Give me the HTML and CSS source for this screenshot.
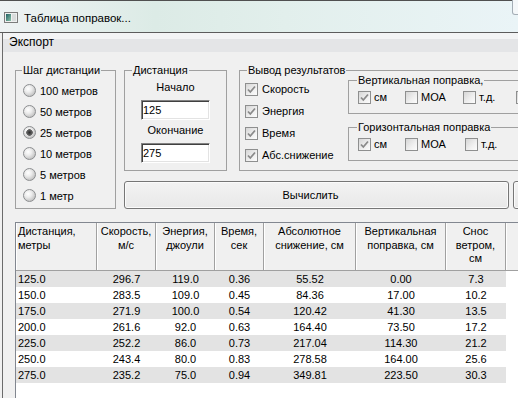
FILE: index.html
```html
<!DOCTYPE html>
<html lang="ru">
<head>
  <meta charset="UTF-8" />
  <title>Таблица поправок...</title>
  <link rel="stylesheet" href="styles.css">
</head>
<body>
  <div class="titlebar">
    <svg class="app-icon" width="14" height="11" viewBox="0 0 14 11">
      <defs>
        <linearGradient id="ico" x1="0" y1="0" x2="1" y2="1">
          <stop offset="0" stop-color="#1f5f63" />
          <stop offset="1" stop-color="#8cc3a8" />
        </linearGradient>
      </defs>
      <rect x="0.5" y="0.5" width="13" height="10" fill="#eef0f0" stroke="#7c7c7c" />
      <rect x="2" y="2" width="5" height="7" fill="url(#ico)" />
      <rect x="8" y="2" width="4" height="7" fill="#d9dcdc" />
    </svg>
    <span class="title">Таблица поправок...</span>
    <span class="win-btn"></span>
  </div>

  <div class="frame">
    <div class="window">
      <div class="menubar"><span>Экспорт</span></div>

      <div class="client">
        <div class="top">
          <fieldset class="group step">
            <legend>Шаг дистанции</legend>
            <div class="radios">
              <label class="radio"><span class="dot"></span>100 метров</label>
              <label class="radio"><span class="dot"></span>50 метров</label>
              <label class="radio"><span class="dot on"></span>25 метров</label>
              <label class="radio"><span class="dot"></span>10 метров</label>
              <label class="radio"><span class="dot"></span>5 метров</label>
              <label class="radio"><span class="dot"></span>1 метр</label>
            </div>
          </fieldset>

          <div class="right">
            <div class="params">
              <fieldset class="group dist">
                <legend>Дистанция</legend>
                <div class="caption">Начало</div>
                <input class="field" type="text" value="125">
                <div class="caption">Окончание</div>
                <input class="field" type="text" value="275">
              </fieldset>

              <fieldset class="group output">
                <legend>Вывод результатов</legend>
                <div class="output-body">
                  <div class="checks">
                    <label class="check"><span class="box on"><svg width="11" height="11" viewBox="0 0 11 11"><path d="M2 5.5 L4.3 8 L9 2.5" /></svg></span>Скорость</label>
                    <label class="check"><span class="box on"><svg width="11" height="11" viewBox="0 0 11 11"><path d="M2 5.5 L4.3 8 L9 2.5" /></svg></span>Энергия</label>
                    <label class="check"><span class="box on"><svg width="11" height="11" viewBox="0 0 11 11"><path d="M2 5.5 L4.3 8 L9 2.5" /></svg></span>Время</label>
                    <label class="check"><span class="box on"><svg width="11" height="11" viewBox="0 0 11 11"><path d="M2 5.5 L4.3 8 L9 2.5" /></svg></span>Абс.снижение</label>
                  </div>

                  <div class="subgroups">
                    <fieldset class="group sub">
                      <legend>Вертикальная поправка,</legend>
                      <div class="units">
                        <label class="check u1"><span class="box on"><svg width="11" height="11" viewBox="0 0 11 11"><path d="M2 5.5 L4.3 8 L9 2.5" /></svg></span>см</label>
                        <label class="check u2"><span class="box"></span>МОА</label>
                        <label class="check u3"><span class="box"></span>т.д.</label>
                        <label class="check"><span class="box"></span></label>
                      </div>
                    </fieldset>
                    <fieldset class="group sub">
                      <legend>Горизонтальная поправка</legend>
                      <div class="units">
                        <label class="check u1"><span class="box on"><svg width="11" height="11" viewBox="0 0 11 11"><path d="M2 5.5 L4.3 8 L9 2.5" /></svg></span>см</label>
                        <label class="check u2 wide"><span class="box"></span>МОА</label>
                        <label class="check u3"><span class="box"></span>т.д.</label>
                      </div>
                    </fieldset>
                  </div>
                </div>
              </fieldset>
            </div>

            <div class="actions">
              <button class="btn calc">Вычислить</button>
              <button class="btn more"></button>
            </div>
          </div>
        </div>

        <div class="grid">
          <table>
            <thead>
              <tr>
                <th class="c1 left">Дистанция,<br>метры</th>
                <th class="c2">Скорость,<br>м/с</th>
                <th class="c3">Энергия,<br>джоули</th>
                <th class="c4">Время,<br>сек</th>
                <th class="c5">Абсолютное<br>снижение, см</th>
                <th class="c6">Вертикальная<br>поправка, см</th>
                <th class="c7">Снос<br>ветром,<br>см</th>
                <th class="filler"></th>
              </tr>
            </thead>
            <tbody>
              <tr><td class="left">125.0</td><td>296.7</td><td>119.0</td><td>0.36</td><td>55.52</td><td>0.00</td><td>7.3</td><td class="filler"></td></tr>
              <tr><td class="left">150.0</td><td>283.5</td><td>109.0</td><td>0.45</td><td>84.36</td><td>17.00</td><td>10.2</td><td class="filler"></td></tr>
              <tr><td class="left">175.0</td><td>271.9</td><td>100.0</td><td>0.54</td><td>120.42</td><td>41.30</td><td>13.5</td><td class="filler"></td></tr>
              <tr><td class="left">200.0</td><td>261.6</td><td>92.0</td><td>0.63</td><td>164.40</td><td>73.50</td><td>17.2</td><td class="filler"></td></tr>
              <tr><td class="left">225.0</td><td>252.2</td><td>86.0</td><td>0.73</td><td>217.04</td><td>114.30</td><td>21.2</td><td class="filler"></td></tr>
              <tr><td class="left">250.0</td><td>243.4</td><td>80.0</td><td>0.83</td><td>278.58</td><td>164.00</td><td>25.6</td><td class="filler"></td></tr>
              <tr><td class="left">275.0</td><td>235.2</td><td>75.0</td><td>0.94</td><td>349.81</td><td>223.50</td><td>30.3</td><td class="filler"></td></tr>
            </tbody>
          </table>
        </div>
      </div>
    </div>
  </div>
</body>
</html>
```

FILE: styles.css
```css
* {
  box-sizing: border-box;
}

body {
  margin: 0;
  width: 518px;
  height: 398px;
  overflow: hidden;
  background-color: #f0f0f0;
  font-family: "Liberation Sans", Arial, sans-serif;
  font-size: 11px;
  color: #000;
}

/* Заголовок окна */
.titlebar {
  display: flex;
  align-items: center;
  height: 33px;
  padding-left: 4px;
  border-top: 1px solid #505050;
  border-bottom: 1px solid #5c5c5c;
  background: linear-gradient(90deg, #eef2f3 0%, #dcebe6 30%, #e2efec 55%, #eaf4f7 100%);
}

.app-icon {
  flex: none;
  margin-top: 1px;
}

.title {
  margin-left: 6px;
  margin-top: 3px;
  font-size: 11.5px;
}

.win-btn {
  align-self: flex-start;
  flex: none;
  width: 12px;
  height: 15px;
  margin-left: auto;
  margin-right: -6px;
  margin-top: -1px;
  border: 1px solid #a4adb5;
  border-top: none;
  border-radius: 0 0 0 3px;
  background: #f4f7f9;
}

.frame {
  padding-left: 2px;
}

.window {
  height: 365px;
  border-left: 1px solid #6b6b6b;
}

.menubar {
  height: 19px;
  padding-left: 6px;
  line-height: 19px;
  font-size: 12px;
  background: linear-gradient(#f3f4f5 0, #f3f4f5 32%, #e4e5e7 33%, #e4e5e7 100%);
}

.client {
  padding: 12px 0 0 12px;
}

.top {
  display: flex;
  gap: 8px;
  align-items: flex-start;
}

/* Групповые рамки */
.group {
  flex: none;
  margin: 0;
  min-width: 0;
  padding: 0;
  border: 1px solid #a0a0a0;
}

.group legend {
  padding: 0 1px;
  line-height: 13px;
  font-size: 11px;
}

.step {
  width: 101px;
  height: 145px;
  padding-left: 6px;
}

.radios {
  display: flex;
  flex-direction: column;
  margin-top: 3px;
}

.radio {
  display: flex;
  align-items: center;
  gap: 4px;
  height: 21px;
  padding-left: 1px;
}

.dot {
  width: 13px;
  height: 13px;
  border-radius: 50%;
  border: 1px solid #8c8e90;
  background: radial-gradient(circle at 38% 35%, #ffffff 0, #ececec 35%, #c4c4c4 75%, #a9a9a9 100%);
}

.dot.on {
  background:
    radial-gradient(circle at 50% 50%, #2e2e2e 0, #4a4a4a 1.5px, #6a6a6a 3px, rgba(120, 120, 120, 0) 3.6px),
    radial-gradient(circle at 38% 35%, #ffffff 0, #ececec 35%, #c4c4c4 75%, #a9a9a9 100%);
}

.right {
  flex: none;
  display: flex;
  flex-direction: column;
}

.params {
  display: flex;
  gap: 12px;
}

.dist {
  width: 103px;
  height: 107px;
  padding: 0 7px;
  display: flex;
  flex-direction: column;
  align-items: center;
}

.caption {
  line-height: 13px;
  margin-top: 4px;
}

.field {
  width: 69px;
  height: 20px;
  margin-top: 6px;
  padding: 0 0 0 1px;
  border: 1px solid;
  border-color: #828282 #ffffff #ffffff #828282;
  box-shadow: inset 1px 1px 0 #404040, inset -1px -1px 0 #e3e3e3;
  background: #fff;
  font: 11px "Liberation Sans", Arial, sans-serif;
  color: #000;
  outline: none;
}

.output {
  width: 340px;
  height: 107px;
  padding-left: 5px;
}

.output > legend {
  margin-left: 2px;
}

.output-body {
  display: flex;
}

.checks {
  flex: none;
  width: 103px;
  display: flex;
  flex-direction: column;
  margin-top: 1px;
}

.check {
  display: flex;
  align-items: center;
  gap: 4px;
  height: 22px;
}

.box {
  flex: none;
  width: 13px;
  height: 13px;
  border: 1px solid #8e8f8f;
  background: linear-gradient(135deg, #d6d6d6 0%, #f0f0f0 60%, #fcfcfc 100%);
}

.box svg {
  display: block;
  fill: none;
  stroke: #8a8a8a;
  stroke-width: 1.8;
}

.subgroups {
  display: flex;
  flex-direction: column;
  gap: 7px;
  margin-top: -3px;
}

.sub {
  width: 220px;
  height: 40px;
  padding-left: 9px;
}

.sub legend {
  margin-left: -1px;
}

.units {
  display: flex;
  margin-top: 2px;
}

.units .check {
  height: 16px;
  gap: 3px;
}

.u1 {
  width: 47px;
}

.u2 {
  width: 58px;
}

.u2.wide {
  width: 60px;
}

.u3 {
  width: 53px;
}

.actions {
  display: flex;
  gap: 4px;
  margin-top: 10px;
}

.btn {
  flex: none;
  height: 28px;
  border: 1px solid #767676;
  border-radius: 3px;
  box-shadow: inset 0 0 0 1px #fbfbfb;
  background: linear-gradient(#f3f3f3, #e8e8e8);
  font: 11px "Liberation Sans", Arial, sans-serif;
  color: #000;
  padding: 0;
}

.calc {
  width: 385px;
  padding-right: 12px;
}

.more {
  width: 40px;
}

/* Таблица результатов */
.grid {
  margin-top: 13px;
  width: 520px;
  height: 190px;
  background: #fff;
  border: 1px solid #828790;
}

.grid table {
  border-collapse: separate;
  border-spacing: 0;
  table-layout: fixed;
  width: 560px;
}

.grid th {
  height: 48px;
  padding: 2px 2px 0;
  vertical-align: top;
  line-height: 13.5px;
  font-weight: normal;
  text-align: center;
  background: #f0f0f0;
  border-right: 1px solid #a0a0a0;
  border-bottom: 1px solid #a0a0a0;
  box-shadow: inset 1px 0 0 #ffffff;
}

.grid th.filler {
  border-right: none;
}

.c1 { width: 81px; }
.c2 { width: 59px; }
.c3 { width: 59px; }
.c4 { width: 49px; }
.c5 { width: 92px; }
.c6 { width: 90px; }
.c7 { width: 60px; }

.grid td {
  height: 16px;
  padding: 0 2px;
  line-height: 15px;
  text-align: center;
  white-space: nowrap;
}

.grid .left {
  text-align: left;
}

.grid tbody tr:nth-child(odd) td {
  background: #e3e3e3;
}

.grid tbody td.filler,
.grid tbody tr:nth-child(odd) td.filler {
  background: #fff;
}
```
